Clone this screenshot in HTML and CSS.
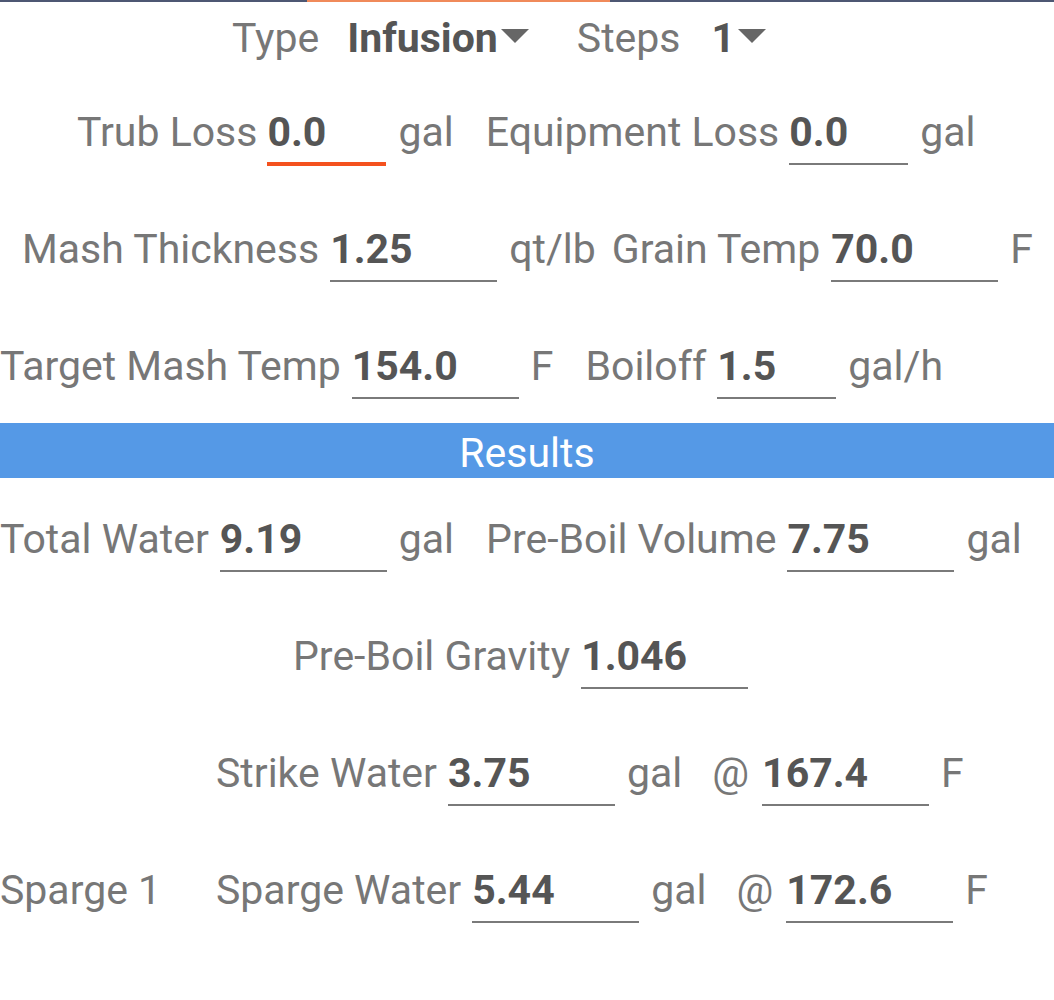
FILE: index.html
```html
<!DOCTYPE html>
<html>
<head>
<meta charset="utf-8">
<link rel="stylesheet" href="styles.css">
</head>
<body>
<div class="topbar"><div class="tab-indicator"></div></div>
<main class="form">
  <div class="row row-type">
    <span class="lbl">Type</span>
    <span class="spin">Infusion<span class="caret"></span></span>
    <span class="lbl steps">Steps</span>
    <span class="spin">1<span class="caret"></span></span>
  </div>
  <div class="row r2">
    <span class="lbl">Trub Loss</span><span class="field short focused">0.0</span><span class="unit">gal</span>
    <span class="lbl next">Equipment Loss</span><span class="field short">0.0</span><span class="unit">gal</span>
  </div>
  <div class="row r3">
    <span class="lbl">Mash Thickness</span><span class="field">1.25</span><span class="unit">qt/lb</span>
    <span class="lbl next-s">Grain Temp</span><span class="field">70.0</span><span class="unit">F</span>
  </div>
  <div class="row r4">
    <span class="lbl">Target Mash Temp</span><span class="field">154.0</span><span class="unit">F</span>
    <span class="lbl next">Boiloff</span><span class="field short">1.5</span><span class="unit">gal/h</span>
  </div>
  <div class="results">Results</div>
  <div class="row r6">
    <span class="lbl">Total Water</span><span class="field">9.19</span><span class="unit">gal</span>
    <span class="lbl next">Pre-Boil Volume</span><span class="field">7.75</span><span class="unit">gal</span>
  </div>
  <div class="row r7">
    <span class="lbl">Pre-Boil Gravity</span><span class="field">1.046</span>
  </div>
  <div class="row r8">
    <span class="lead"></span>
    <span class="lbl">Strike Water</span><span class="field">3.75</span><span class="unit">gal</span>
    <span class="at">@</span><span class="field">167.4</span><span class="unit">F</span>
  </div>
  <div class="row r9">
    <span class="lead">Sparge 1</span>
    <span class="lbl">Sparge Water</span><span class="field">5.44</span><span class="unit">gal</span>
    <span class="at">@</span><span class="field">172.6</span><span class="unit">F</span>
  </div>
</main>
</body>
</html>
```
FILE: styles.css
```css
html, body {
  margin: 0;
  padding: 0;
  background: #ffffff;
}
body {
  font-family: Roboto, "Noto Sans", "Liberation Sans", sans-serif;
  font-size: 41px;
  line-height: 47px;
  color: #777777;
  width: 1054px;
  height: 1000px;
  overflow: hidden;
}
.topbar {
  height: 2px;
  background: #4d5773;
  position: relative;
}
.tab-indicator {
  position: absolute;
  left: 307px;
  top: 0;
  width: 303px;
  height: 2px;
  background: #f08a5a;
}
.form {
  display: flex;
  flex-direction: column;
}
.row {
  display: flex;
  align-items: baseline;
  height: 117px;
  white-space: nowrap;
}
.row-type {
  height: 107px;
  padding-top: 13px;
  box-sizing: border-box;
  padding-left: 232px;
}
.row-type .lbl { margin-right: 28px; }
.row-type .steps { margin-left: 48px; margin-right: 31px; }
.spin {
  font-weight: bold;
  color: #555555;
  display: inline-flex;
  align-items: flex-start;
}
.caret {
  width: 0;
  height: 0;
  border-left: 14px solid transparent;
  border-right: 14px solid transparent;
  border-top: 14px solid #666666;
  margin-top: 14px;
  margin-left: 3px;
}
.lbl { color: #777777; }
.field {
  display: inline-block;
  box-sizing: border-box;
  width: 167px;
  margin-left: 11px;
  padding-bottom: 7px;
  border-bottom: 2px solid #7a7a7a;
  font-weight: bold;
  color: #555555;
}
.field.short { width: 119px; }
.field.focused {
  border-bottom: 4px solid #f4511e;
  padding-bottom: 6px;
}
.r2 .field { margin-left: 10px; }
.unit { margin-left: 12px; color: #777777; }
.next { margin-left: 32px; }
.next-s { margin-left: 16px; }
.at { margin-left: 30px; }
.at + .field { margin-left: 13px; }
.r2 { padding-left: 77px; }
.r3 { padding-left: 22px; }
.r4 { padding-left: 0; height: 80px; }
.r6 { padding-left: 0; }
.r7 { padding-left: 293px; }
.r8, .r9 { padding-left: 0; }
.lead {
  display: inline-block;
  width: 216px;
}
.results {
  height: 55px;
  line-height: 55px;
  background: #5599e6;
  color: #ffffff;
  text-align: center;
  padding-top: 3px;
  box-sizing: border-box;
  margin-bottom: 38px;
}
```
